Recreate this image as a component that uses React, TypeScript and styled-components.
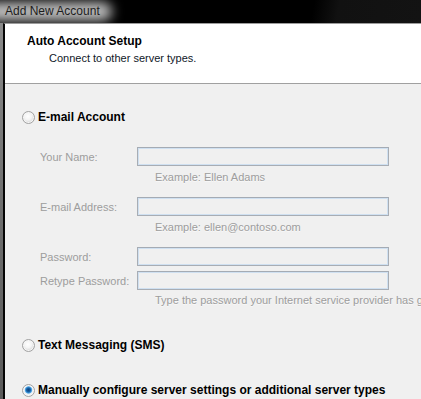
import React from 'react';
import styled, { createGlobalStyle } from 'styled-components';

const GlobalStyle = createGlobalStyle`
  html, body {
    margin: 0;
    padding: 0;
    background: #000;
  }
  body {
    font-family: "Liberation Sans", Arial, sans-serif;
    overflow: hidden;
  }
`

const Window = styled.div`
  width: 421px;
  height: 399px;
  display: flex;
  flex-direction: column;
  overflow: hidden;
  background: #000;
`

const TitleBar = styled.div`
  height: 23px;
  flex-shrink: 0;
  display: flex;
  align-items: center;
  overflow: hidden;
  background: linear-gradient(100deg, #000 0%, #000 74%, #111 80%, #131313 100%);
`

// aero glow behind the caption
const TitleText = styled.span`
  position: relative;
  z-index: 0;
  padding: 0 12px 0 5px;
  font-size: 12px;
  line-height: 23px;
  color: #1c1c1c;
  white-space: nowrap;

  &::before {
    content: '';
    position: absolute;
    left: -14px;
    right: 0;
    top: 2px;
    bottom: 2px;
    background: #bdbdbd;
    border-radius: 12px;
    filter: blur(6px);
    z-index: -1;
  }
`

const Body = styled.div`
  flex: 1;
  display: flex;
  min-height: 0;
`

const Frame = styled.div`
  width: 3px;
  flex-shrink: 0;
  background: linear-gradient(180deg, #8a8a8a 0%, #6e6e6e 50%, #5a5a5a 100%);
`

const Content = styled.div`
  flex: 1;
  display: flex;
  flex-direction: column;
  border-left: 2px solid #050505;
  border-top: 1px solid #9c9c9c;
  background: #f0f0f0;
  min-width: 0;
`

const Header = styled.div`
  height: 60px;
  flex-shrink: 0;
  background: #fff;
  border-bottom: 1px solid #a0a0a0;
  padding: 10px 0 0 22px;
  box-sizing: border-box;
`

const HeaderTitle = styled.div`
  font-size: 12px;
  font-weight: bold;
  line-height: 15px;
  color: #000;
`

const HeaderSub = styled.div`
  font-size: 11px;
  line-height: 14px;
  color: #101828;
  padding: 2px 0 0 22px;
`

const Form = styled.div`
  display: flex;
  flex-direction: column;
  padding: 26px 0 0 17px;
  white-space: nowrap;
`

const Option = styled.label<{ $top?: number }>`
  display: flex;
  align-items: center;
  gap: 3px;
  margin-top: ${p => p.$top ?? 0}px;
  font-size: 12px;
  font-weight: bold;
  line-height: 15px;
  color: #000;
`

const Radio = styled.span<{ $checked?: boolean }>`
  width: 13px;
  height: 13px;
  flex-shrink: 0;
  box-sizing: border-box;
  border-radius: 50%;
  border: 1px solid #a2a2a2;
  background: ${p => p.$checked
    ? 'radial-gradient(circle at 50% 45%, #0b3f78 0%, #1a63a8 25%, #4fa8e8 40%, #e9eef3 50%, #fff 100%)'
    : 'radial-gradient(circle at 45% 40%, #fff 0%, #f4f4f4 40%, #d2d2d2 75%, #e6e6e6 100%)'};
  box-shadow: inset 0 0 0 1px #f6f6f6;
`

const Fields = styled.div<{ $top?: number }>`
  display: flex;
  flex-direction: column;
  padding-left: 18px;
  margin-top: ${p => p.$top ?? 0}px;
`

const Row = styled.div<{ $top?: number }>`
  display: flex;
  align-items: center;
  margin-top: ${p => p.$top ?? 0}px;
`

const Label = styled.span`
  width: 97px;
  flex-shrink: 0;
  font-size: 11px;
  line-height: 14px;
  color: #9d9d9d;
`

const Input = styled.div`
  width: 252px;
  height: 19px;
  flex-shrink: 0;
  box-sizing: border-box;
  border: 1px solid #a8adb4;
  border-top-color: #a4abb4;
  box-shadow: inset 0 0 0 1px #cfe0f1;
  background: #f0f0f0;
`

const Hint = styled.div<{ $top?: number }>`
  margin: ${p => p.$top ?? 4}px 0 0 115px;
  font-size: 11px;
  line-height: 14px;
  color: #9d9d9d;
  text-shadow: 0 1px 0 rgba(255, 255, 255, 0.6);
`

export default function App() {
  return (
    <Window>
      <GlobalStyle />
      <TitleBar>
        <TitleText>Add New Account</TitleText>
      </TitleBar>
      <Body>
        <Frame />
        <Content>
          <Header>
            <HeaderTitle>Auto Account Setup</HeaderTitle>
            <HeaderSub>Connect to other server types.</HeaderSub>
          </Header>
          <Form>
            <Option>
              <Radio />
              E-mail Account
            </Option>
            <Fields $top={22}>
              <Row>
                <Label>Your Name:</Label>
                <Input />
              </Row>
              <Hint>Example: Ellen Adams</Hint>
              <Row $top={13}>
                <Label>E-mail Address:</Label>
                <Input />
              </Row>
              <Hint>Example: ellen@contoso.com</Hint>
              <Row $top={13}>
                <Label>Password:</Label>
                <Input />
              </Row>
              <Row $top={5}>
                <Label>Retype Password:</Label>
                <Input />
              </Row>
              <Hint $top={3}>Type the password your Internet service provider has given you.</Hint>
            </Fields>
            <Option $top={31}>
              <Radio />
              Text Messaging (SMS)
            </Option>
            <Option $top={30}>
              <Radio $checked />
              Manually configure server settings or additional server types
            </Option>
          </Form>
        </Content>
      </Body>
    </Window>
  );
}
